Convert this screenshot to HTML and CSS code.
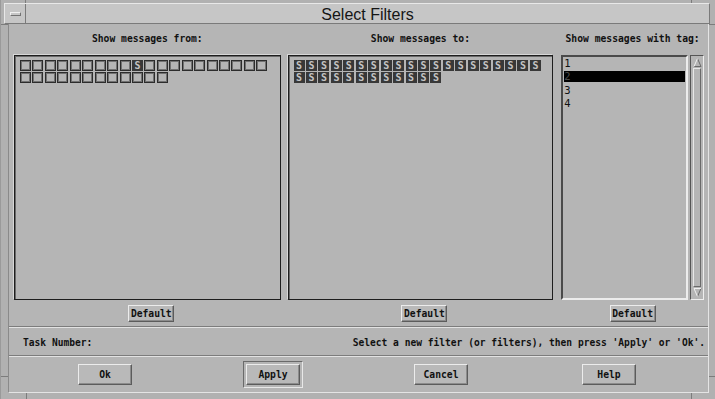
FILE: index.html
```
<!DOCTYPE html>
<html>

<head>
    <link rel="stylesheet" href="styles.css">
</head>

<body>
    <div class="window">
        <span class="mark mark-top mark-l"></span>
        <span class="mark mark-top mark-r"></span>
        <span class="mark mark-bottom mark-l"></span>
        <span class="mark mark-bottom mark-r"></span>
        <span class="mark mark-side mark-left mark-t"></span>
        <span class="mark mark-side mark-left mark-b"></span>
        <span class="mark mark-side mark-right mark-t"></span>
        <span class="mark mark-side mark-right mark-b"></span>

        <div class="titlebar">
            <div class="menu-btn"><span class="dash"></span></div>
            <div class="title">Select Filters</div>
        </div>

        <div class="client">
            <div class="filters">
                <div class="col col-from">
                    <div class="label">Show messages from:</div>
                    <div class="list box-list">
                        <span class="cell empty"></span><span class="cell empty"></span><span class="cell empty"></span><span class="cell empty"></span><span class="cell empty"></span>
                        <span class="cell empty"></span><span class="cell empty"></span><span class="cell empty"></span><span class="cell empty"></span><span class="cell dark">S</span>
                        <span class="cell empty"></span><span class="cell empty"></span><span class="cell empty"></span><span class="cell empty"></span><span class="cell empty"></span>
                        <span class="cell empty"></span><span class="cell empty"></span><span class="cell empty"></span><span class="cell empty"></span><span class="cell empty"></span>
                        <span class="cell empty"></span><span class="cell empty"></span><span class="cell empty"></span><span class="cell empty"></span><span class="cell empty"></span>
                        <span class="cell empty"></span><span class="cell empty"></span><span class="cell empty"></span><span class="cell empty"></span><span class="cell empty"></span>
                        <span class="cell empty"></span><span class="cell empty"></span>
                    </div>
                    <button class="btn btn-small btn-shift">Default</button>
                </div>

                <div class="col col-to">
                    <div class="label">Show messages to:</div>
                    <div class="list box-list">
                        <span class="cell dark">S</span><span class="cell dark">S</span><span class="cell dark">S</span><span class="cell dark">S</span><span class="cell dark">S</span>
                        <span class="cell dark">S</span><span class="cell dark">S</span><span class="cell dark">S</span><span class="cell dark">S</span><span class="cell dark">S</span>
                        <span class="cell dark">S</span><span class="cell dark">S</span><span class="cell dark">S</span><span class="cell dark">S</span><span class="cell dark">S</span>
                        <span class="cell dark">S</span><span class="cell dark">S</span><span class="cell dark">S</span><span class="cell dark">S</span><span class="cell dark">S</span>
                        <span class="cell dark">S</span><span class="cell dark">S</span><span class="cell dark">S</span><span class="cell dark">S</span><span class="cell dark">S</span>
                        <span class="cell dark">S</span><span class="cell dark">S</span><span class="cell dark">S</span><span class="cell dark">S</span><span class="cell dark">S</span>
                        <span class="cell dark">S</span><span class="cell dark">S</span>
                    </div>
                    <button class="btn btn-small btn-shift">Default</button>
                </div>

                <div class="col col-tag">
                    <div class="label">Show messages with tag:</div>
                    <div class="list tag-wrap">
                        <div class="tag-list">
                            <div class="tag-item">1</div>
                            <div class="tag-item selected">2</div>
                            <div class="tag-item">3</div>
                            <div class="tag-item">4</div>
                        </div>
                        <div class="scrollbar">
                            <div class="arrow">
                                <svg width="9" height="10" viewBox="0 0 9 10">
                                    <path d="M4.5 1.5 L8 9.5 L1 9.5" fill="none" stroke="#6a6a6a" stroke-width="1" />
                                    <path d="M1 9.5 L4.5 1.5" fill="none" stroke="#f0f0f0" stroke-width="1" />
                                </svg>
                            </div>
                            <div class="slider"></div>
                            <div class="arrow">
                                <svg width="9" height="10" viewBox="0 0 9 10">
                                    <path d="M8 0.5 L4.5 8.5" fill="none" stroke="#6a6a6a" stroke-width="1" />
                                    <path d="M4.5 8.5 L1 0.5 L8 0.5" fill="none" stroke="#f0f0f0" stroke-width="1" />
                                </svg>
                            </div>
                        </div>
                    </div>
                    <button class="btn btn-small">Default</button>
                </div>
            </div>

            <div class="sep"></div>

            <div class="status">
                <span>Task Number:</span>
                <span>Select a new filter (or filters), then press 'Apply' or 'Ok'.</span>
            </div>

            <div class="sep"></div>

            <div class="actions">
                <button class="btn btn-big">Ok</button>
                <div class="default-frame"><button class="btn btn-big">Apply</button></div>
                <button class="btn btn-big">Cancel</button>
                <button class="btn btn-big">Help</button>
            </div>
        </div>
    </div>
</body>

</html>
```

FILE: styles.css
```
* {
    padding: 0;
    margin: 0;
    box-sizing: border-box;
}

body {
    background: #b1b1b1;
    font-family: "DejaVu Sans Mono", "Liberation Mono", monospace;
    color: #111;
}

.window {
    position: relative;
    width: 715px;
    height: 399px;
    background: #b1b1b1;
    padding: 3px 5px 6px 3px;
    display: flex;
    flex-direction: column;
    border-left: 1px solid #9a9a9a;
}

/* resize handle notches on the frame */
.mark {
    position: absolute;
    background: #7c7c7c;
}

.mark-top,
.mark-bottom {
    width: 1px;
    height: 3px;
}

.mark-top {
    top: 0;
}

.mark-bottom {
    bottom: 0;
    height: 6px;
}

.mark-top.mark-l {
    left: 24px;
}

.mark-bottom.mark-l {
    left: 25px;
}

.mark-r {
    left: 690px;
}

.mark-side {
    width: 7px;
    height: 1px;
}

.mark-left {
    left: 0;
}

.mark-right {
    right: 0;
    width: 6px;
}

.mark-t {
    top: 24px;
}

.mark-b {
    top: 376px;
}

.titlebar {
    height: 21px;
    display: flex;
    background: #c6c6c6;
    border: 1px solid;
    border-color: #e8e8e8 #7a7a7a #7a7a7a #e8e8e8;
}

.menu-btn {
    width: 21px;
    border-right: 1px solid #7a7a7a;
    display: flex;
    align-items: center;
    justify-content: center;
}

.dash {
    width: 11px;
    height: 4px;
    border: 1px solid;
    border-color: #f0f0f0 #727272 #727272 #f0f0f0;
}

.title {
    flex: 1;
    text-align: center;
    font-family: "Liberation Sans", Arial, sans-serif;
    font-size: 16px;
    line-height: 17px;
    padding-top: 2px;
    color: #151515;
}

.client {
    flex: 1;
    margin: 0 1px 0 4px;
    background: #b5b5b5;
    border-left: 1px solid #8a8a8a;
    border-right: 1px solid #e4e4e4;
    border-bottom: 1px solid #e4e4e4;
    display: flex;
    flex-direction: column;
}

.filters {
    display: flex;
    padding: 8px 4px 4px 5px;
}

.col {
    display: flex;
    flex-direction: column;
    align-items: center;
}

.col-from {
    width: 267px;
    margin-right: 7px;
}

.col-to {
    width: 266px;
    margin-right: 8px;
}

.col-tag {
    width: 143px;
}

.label {
    height: 13px;
    line-height: 13px;
    margin-bottom: 10px;
    font-size: 9.7px;
    font-weight: bold;
    white-space: nowrap;
}

.list {
    width: 100%;
    height: 245px;
}

.box-list {
    border: 1px solid #1e1e1e;
    box-shadow: inset 1px 1px 0 #6a6a6a, -1px -1px 0 #d8d8d8;
    padding: 4px 5px;
    display: flex;
    flex-wrap: wrap;
    align-content: flex-start;
}

.cell {
    width: 11px;
    height: 11px;
    margin: 0 1.45px 1px 0;
    font-size: 10px;
    font-weight: bold;
    line-height: 11px;
    text-align: center;
}

.cell.empty {
    border: 1px solid #2c2c2c;
    box-shadow: inset 0 0 0 1px #727272;
}

.cell.dark {
    background: #383838;
    color: #c4c4c4;
}

.tag-wrap {
    display: flex;
    gap: 2px;
}

.tag-list {
    flex: 1;
    border: 2px solid;
    border-color: #4a4a4a #ececec #ececec #4a4a4a;
    padding: 1px;
    font-size: 10.5px;
}

.tag-item {
    height: 11px;
    line-height: 11px;
    margin-bottom: 2.4px;
    color: #111;
}

.tag-item.selected {
    background: #000;
    color: #4a4a4a;
}

.scrollbar {
    width: 14px;
    border: 1px solid;
    border-color: #555 #eee #eee #555;
    padding: 1px;
    display: flex;
    flex-direction: column;
}

.arrow {
    height: 10px;
    display: flex;
    justify-content: center;
}

.slider {
    flex: 1;
    margin: 1px 1px;
    border: 1px solid;
    border-color: #e8e8e8 #6a6a6a #6a6a6a #e8e8e8;
}

.btn {
    font-family: "DejaVu Sans Mono", "Liberation Mono", monospace;
    font-size: 9.7px;
    font-weight: bold;
    color: #111;
    background: #b9b9b9;
    border: 1px solid;
    border-color: #ececec #5c5c5c #5c5c5c #ececec;
    box-shadow: inset -1px -1px 0 #8c8c8c;
}

.btn-small {
    width: 46px;
    height: 17px;
    margin-top: 5px;
}

.btn-shift {
    margin-left: 8px;
}

.btn-big {
    width: 54px;
    height: 21px;
}

.default-frame {
    padding: 2px;
    border: 1px solid;
    border-color: #6a6a6a #e8e8e8 #e8e8e8 #6a6a6a;
    display: flex;
}

.sep {
    height: 2px;
    border-top: 1px solid #7c7c7c;
    border-bottom: 1px solid #e2e2e2;
}

.status {
    height: 27px;
    display: flex;
    justify-content: space-between;
    align-items: center;
    padding: 2px 3px 0 14px;
    font-size: 9.6px;
    font-weight: bold;
    white-space: nowrap;
}

.actions {
    flex: 1;
    display: grid;
    grid-template-columns: repeat(4, 168px);
    justify-items: center;
    align-items: center;
    padding-left: 12px;
}
```
